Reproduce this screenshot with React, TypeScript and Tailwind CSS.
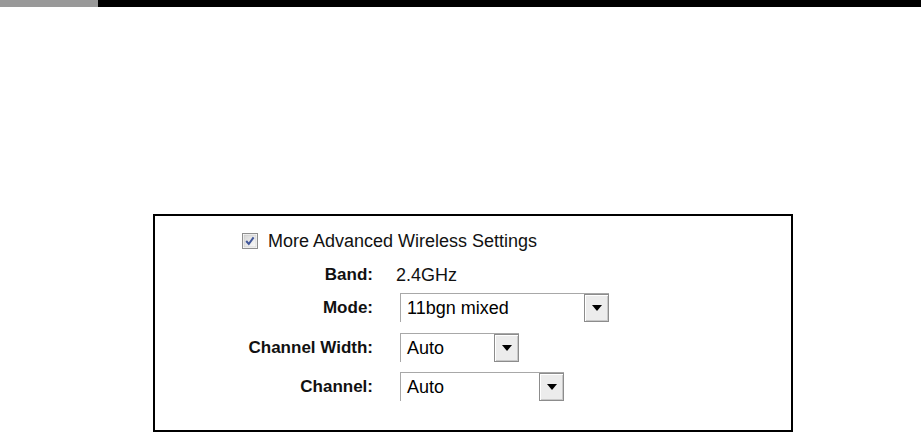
import React from 'react'

const font = { fontFamily: '"Liberation Sans", Arial, sans-serif' }

function DropButton() {
  return (
    <div className="w-[25px] h-full border border-[#8c8c8c] bg-[#ececec] flex items-center justify-center shadow-[inset_1px_1px_0_#ffffff,inset_-1px_-1px_0_#c8c8c8]">
      <svg width="10" height="6" viewBox="0 0 10 6">
        <path d="M0 0 H10 L5 6 Z" fill="#000" />
      </svg>
    </div>
  )
}

function Select({ value, width }: { value: string; width: string }) {
  return (
    <div className={`ml-1 h-[29px] flex border-t border-l border-[#a8a8a8] bg-white ${width}`}>
      <div className="flex-1 flex items-center pl-[6px] pt-[1px] text-[18px] text-black">{value}</div>
      <DropButton />
    </div>
  )
}

function Row({ label, children, height, top }: { label: string; children: React.ReactNode; height: string; top: string }) {
  return (
    <div className={`flex items-center ${height} ${top}`}>
      <div className="w-[218px] pr-0 text-right text-[17px] font-bold text-[#111]">{label}</div>
      <div className="ml-[23px] flex items-center">{children}</div>
    </div>
  )
}

export default function App() {
  return (
    <div className="w-[921px] h-[432px] bg-white overflow-hidden" style={font}>
      {/* top bar */}
      <div className="flex h-[7px]">
        <div className="w-[98px] bg-[#999999]" />
        <div className="flex-1 bg-black" />
      </div>

      {/* settings box */}
      <div className="ml-[153px] mt-[207px] w-[640px] h-[218px] border-2 border-black flex flex-col pt-[15px]">
        <div className="flex items-center h-[20px] pl-[87px]">
          <svg width="16" height="16" viewBox="0 0 16 16">
            <defs>
              <linearGradient id="cb" x1="0" y1="0" x2="1" y2="1">
                <stop offset="0" stopColor="#d6d6d6" />
                <stop offset="1" stopColor="#fbfbfb" />
              </linearGradient>
            </defs>
            <rect x="0.5" y="0.5" width="15" height="15" fill="#fff" stroke="#8f8f8f" />
            <rect x="2" y="2" width="12" height="12" fill="url(#cb)" stroke="#c4c4c4" strokeWidth="0.6" />
            <path d="M4.2 8 L6.8 11 L11.6 4.4" fill="none" stroke="#41579a" strokeWidth="2" />
          </svg>
          <span className="ml-[10px] text-[18px] text-[#111]">More Advanced Wireless Settings</span>
        </div>

        <Row label="Band:" height="h-[22px]" top="mt-[13px]">
          <span className="text-[18px] text-[#111]">2.4GHz</span>
        </Row>
        <Row label="Mode:" height="h-[29px]" top="mt-[7px]">
          <Select value="11bgn mixed" width="w-[209px]" />
        </Row>
        <Row label="Channel Width:" height="h-[29px]" top="mt-[11px]">
          <Select value="Auto" width="w-[119px]" />
        </Row>
        <Row label="Channel:" height="h-[29px]" top="mt-[10px]">
          <Select value="Auto" width="w-[164px]" />
        </Row>
      </div>
    </div>
  )
}
